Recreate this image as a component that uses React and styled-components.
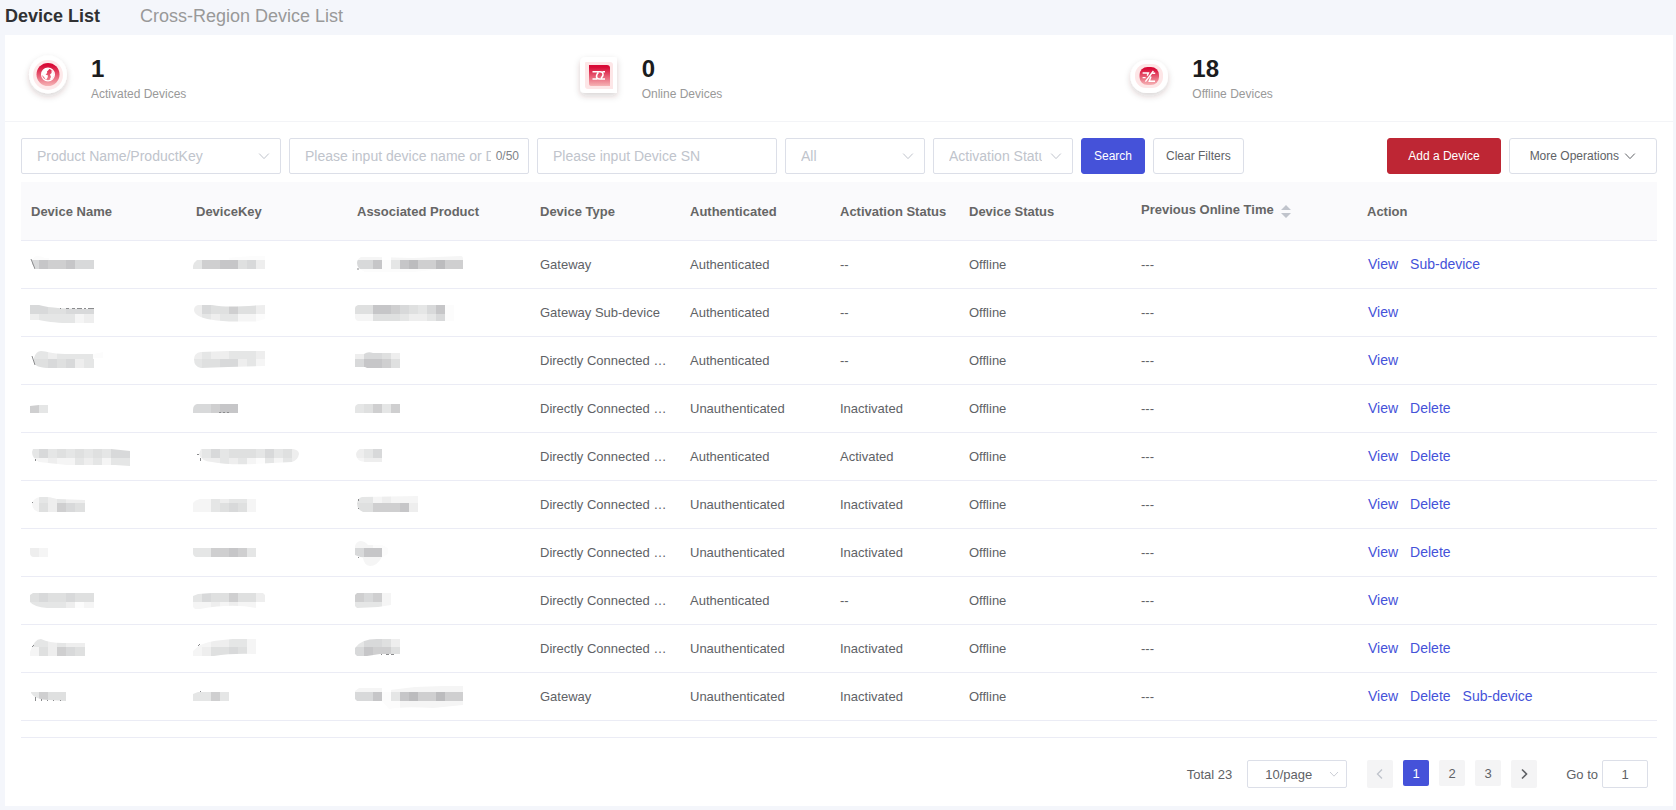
import { useId, useState } from "react";
import styled, { createGlobalStyle, css } from "styled-components";

const blue = "#4552d9";
const line = "#ebecf5";

const TONES = [
  "#fcfcfc",
  "#f5f5f5",
  "#eeeeee",
  "#e5e6e6",
  "#dfe0e0",
  "#d8d9da",
  "#cfcfd0",
  "#c6c6c8",
  "#bcbcbe",
];

// mosaic: x offset comes from the column, bands are [y, height, tones]
const devices = [
  {
    name: { bands: [[4, 5, "00"], [9, 9, "5766755"]], clip: "M5 9C7 4 12 4 18 7L67 9V18H9L5 13Z", marks: "M4 8l4 10" },
    key: { bands: [[5, 4, "....0000"], [9, 9, "36677452"]], clip: "M5 9L73 4V18H1V15Q2 11 5 9Z" },
    product: {
      bands: [[5, 4, "111.11111111"], [9, 9, "557037866866"], [18, 3, "000000000"]],
      clip: "M8 6H22L60 7L108 5Q110 5 110 8V18H90L60 21H12Q4 18 4 12Q4 8 8 6Z",
      marks: "M5 17v2",
    },
    type: "Gateway",
    auth: "Authenticated",
    activation: "--",
    actions: ["View", "Sub-device"],
  },
  {
    name: {
      bands: [[6, 9, "5544555"], [15, 9, "2333312"]],
      clip: "M3 6H12C22 9 40 10 67 10V24H40C28 24 18 22 12 21H3Z",
      marks: "M33 9.5h1M39 9.5h3M45 9.5h3M50 9.5h5M57 9.5h2M61 9.5h6",
    },
    key: { bands: [[6, 9, "25446442"], [15, 8, "23233110"]], clip: "M6 6H20C36 9 50 7 73 6V20L64 22.5H40C25 22 2 20 2 11Q2 7 6 6Z" },
    product: { bands: [[6, 9, "44776543570"], [15, 7, "11444322350"]], clip: "M5 6H101V22H5Q2 21 2 18V9Q2 7 5 6Z" },
    type: "Gateway Sub-device",
    auth: "Authenticated",
    activation: "--",
    actions: ["View"],
  },
  {
    name: { bands: [[4, 8, "33233330"], [12, 9, "4454523"]], clip: "M14 4C20 4 24 7 38 7H67L76 5V11H67V21H20C12 20 6 20 7 11Q9 4 14 4Z", marks: "M5 9l3 9" },
    key: { bands: [[4, 8, "23223332"], [12, 9, "34455231"]], clip: "M9 5L36 4H73V19L36 20L9 21Q2 20 2 12Q2 6 9 5Z" },
    product: { bands: [[5, 7, "25542"], [12, 9, "57764"]], clip: "M2 7H11Q15 4 20 6H47V21H14L12 20H2Z" },
    type: "Directly Connected Device",
    auth: "Authenticated",
    activation: "--",
    actions: ["View"],
  },
  {
    name: { bands: [[10, 8, "63"]], clip: "M3 11L21 9V18H3Z" },
    key: { bands: [[9, 9, "55677"]], clip: "M5 9H46V18H1V15Q1 10 5 9Z", marks: "M27 17.5h2M31 17.5h2M35 17.5h2" },
    product: { bands: [[9, 9, "34636"]], clip: "M5 9H47V18H2V13Q2 10 5 9Z" },
    type: "Directly Connected Device",
    auth: "Unauthenticated",
    activation: "Inactivated",
    actions: ["View", "Delete"],
  },
  {
    name: {
      bands: [[6, 9, "35343434355"], [15, 8, "11211323133"]],
      clip: "M6 6H84L103 8V23L88 22H40L12 19Q5 15 5 9Z",
      marks: "M8.5 16v2",
    },
    key: {
      bands: [[6, 9, "235344435342"], [15, 8, "122323103132"]],
      clip: "M9 6H101Q107 7 107 11Q106 17 100 19L80 20Q40 23 20 19Q9 18 7 11Z",
      marks: "M5 11.5h2M8.5 15v3",
    },
    product: { bands: [[6, 9, "235"], [15, 4, "122"]], clip: "M7 6H29V19H12Q3 18 3 11Q4 7 7 6Z" },
    type: "Directly Connected Device",
    auth: "Authenticated",
    activation: "Activated",
    actions: ["View", "Delete"],
  },
  {
    name: { bands: [[6, 6, "132322"], [12, 9, "142654"]], clip: "M13 6Q20 5 30 8L58 9V21H11Q5 19 5 12Q7 7 13 6Z", marks: "M5 11.5h1" },
    key: { bands: [[8, 4, "1132331"], [12, 9, "1134541"]], clip: "M8 8H64V21H1V12Q3 9 8 8Z" },
    product: { bands: [[5, 7, "3312111"], [12, 9, "4466672"]], clip: "M9 6L65 5V21H10Q4 19 4 12Q5 7 9 6Z", marks: "M5.5 8v2M5.5 17v1" },
    type: "Directly Connected Device",
    auth: "Unauthenticated",
    activation: "Inactivated",
    actions: ["View", "Delete"],
  },
  {
    name: { bands: [[9, 9, "21"]], clip: "M3 9H21V18H6Q3 17 3 14Z" },
    key: { bands: [[9, 9, "3366763"]], clip: "M1 9H64V18H4Q1 17 1 14Z" },
    product: {
      bands: [[2, 7, "1100"], [9, 9, "5770"], [18, 9, "1111"]],
      clip: "M7 2Q12 2 15 6H29L35 9V15L29 18Q24 27 17 27Q11 26 10 19L2 16V7Q3 3 7 2Z",
      marks: "M5.5 18v1",
    },
    type: "Directly Connected Device",
    auth: "Unauthenticated",
    activation: "Inactivated",
    actions: ["View", "Delete"],
  },
  {
    name: { bands: [[6, 9, "4544544"], [15, 6, "3333201"]], clip: "M6 6H67V21H20Q7 20 3 15V8Z" },
    key: { bands: [[6, 9, "35446442"], [15, 7, "1121211"]], clip: "M6 7L20 6H71L73 8V15H64V21Q40 16 8 22H3L1 20V9Z" },
    product: { bands: [[6, 9, "6561"], [15, 6, "3331"]], clip: "M4 6H38V18L25 20L4 21L2 19V8Z" },
    type: "Directly Connected Device",
    auth: "Authenticated",
    activation: "--",
    actions: ["View"],
  },
  {
    name: { bands: [[4, 8, "332322"], [12, 9, "142654"]], clip: "M14 4Q22 8 36 8H58V21H3V17Q7 4 14 4Z", marks: "M5 11.5h1M6 10.5h1" },
    key: { bands: [[4, 8, "1122331"], [12, 9, "1244541"]], clip: "M1 16Q8 8 22 6Q44 3 64 3V19Q40 18 22 21H1Z", marks: "M6 11l2-2" },
    product: { bands: [[4, 8, "35542"], [12, 9, "57664"]], clip: "M2 13Q8 4 24 4L47 3V19H27L14 21H4L2 19Z", marks: "M28 19.5h1M33 19.5h3M38 19.5h3" },
    type: "Directly Connected Device",
    auth: "Unauthenticated",
    activation: "Inactivated",
    actions: ["View", "Delete"],
  },
  {
    name: { bands: [[9, 9, "3644"]], clip: "M4 9H39V18L22 17Q8 17 4 10Z", marks: "M8.5 14v4M14.5 16v2M20 17.5h1M26 17.5h1M33 17.5h1" },
    key: { bands: [[9, 9, "3363"]], clip: "M6 9H37V18H1V11Z", marks: "M8 8.5h1" },
    product: {
      bands: [[3, 6, "111.11111111"], [9, 9, "557037866866"], [18, 8, "0.0001111111"]],
      clip: "M6 5H29V8L62 4L90 3H110V22L80 25Q50 23 36 26L29 18H4L2 16V8Z",
    },
    type: "Gateway",
    auth: "Unauthenticated",
    activation: "Inactivated",
    actions: ["View", "Delete", "Sub-device"],
  },
];

const columns = [
  { label: "Device Name", width: 165 },
  { label: "DeviceKey", width: 161 },
  { label: "Associated Product", width: 183 },
  { label: "Device Type", width: 150 },
  { label: "Authenticated", width: 150 },
  { label: "Activation Status", width: 129 },
  { label: "Device Status", width: 172 },
  { label: "Previous Online Time", width: 226, sortable: true },
  { label: "Action", width: 300 },
];

const Mosaic = ({ x, data }) => {
  const id = useId();
  return (
    <MosaicSvg width="116" height="27" aria-hidden="true">
      <clipPath id={id}>
        <path d={data.clip} />
      </clipPath>
      <g clipPath={`url(#${id})`} shapeRendering="crispEdges">
        {data.bands.map(([y, h, tones]) =>
          [...tones].map(
            (tone, i) =>
              tone !== "." && (
                <rect
                  key={`${y}-${i}`}
                  x={x + i * 9}
                  y={y}
                  width={i === tones.length - 1 ? 10 : 9}
                  height={h}
                  fill={TONES[tone]}
                />
              )
          )
        )}
      </g>
      {data.marks && <path d={data.marks} stroke="#8b8c8e" fill="none" />}
    </MosaicSvg>
  );
};

const Chevron = ({ size = 12, width = 1 }) => (
  <svg width={size} height={size} viewBox="0 0 12 12" aria-hidden="true">
    <path
      d="M1.2 3.6L6 8.6L10.8 3.6"
      fill="none"
      stroke="currentColor"
      strokeWidth={width}
    />
  </svg>
);

const SortIcon = () => (
  <SortSvg width="24" height="34" aria-hidden="true">
    <path d="M7 16L12 11L17 16ZM7 19H17L12 24Z" fill="#c0c4cc" />
  </SortSvg>
);

const IconDefs = ({ id }) => (
  <defs>
    <linearGradient id={`${id}g`} x1="0" y1="0" x2="0" y2="1">
      <stop offset="0.1" stopColor="#d80a36" />
      <stop offset="1" stopColor="#f6b3b5" />
    </linearGradient>
    <filter id={`${id}s`} x="-40%" y="-40%" width="180%" height="180%">
      <feDropShadow dx="0" dy="3" stdDeviation="3" floodColor="#402828" floodOpacity="0.2" />
    </filter>
  </defs>
);

const ActivatedIcon = () => {
  const id = useId();
  return (
    <svg width="54" height="54" aria-hidden="true">
      <IconDefs id={id} />
      <circle cx="27" cy="23.5" r="19" fill="#fff" filter={`url(#${id}s)`} />
      <circle cx="27" cy="24" r="15" fill="#fde9ea" />
      <circle cx="27" cy="23.5" r="11.5" fill={`url(#${id}g)`} />
      <circle cx="27" cy="23.5" r="6.4" fill="none" stroke="#fff" strokeWidth="1.2" />
      <path
        d="M21 20.5L24 17.5L28.5 17.3L27.6 19L26 20.4L26.2 22L24.6 23.4L27 24.6L26.6 26.6L25 29L23 26L21 24Z"
        fill="#fff"
      />
      <path d="M30.5 19L32.8 21.5L33 25L30.5 28.4L28.6 28.8L30 26L29 23.6L30.6 22Z" fill="#fff" />
    </svg>
  );
};

const OnlineIcon = () => {
  const id = useId();
  return (
    <svg width="54" height="54" aria-hidden="true">
      <IconDefs id={id} />
      <path
        d="M14 6H42Q45 6 45 9V42H13Q8 42 8 37V12Q8 6 14 6Z"
        fill="#fff"
        filter={`url(#${id}s)`}
      />
      <path d="M14 11H38Q41 11 41 14V38H16Q13 38 13 35V12Q13 11 14 11Z" fill="#fde6e7" />
      <path d="M17 14H35Q38 14 38 17V35H20Q17 35 17 33Z" fill={`url(#${id}g)`} />
      <path
        d="M20.5 20.8H28Q31.4 21 31 24Q30.6 26 29 27M33 28H27.4Q24 27.6 24.6 24.6Q25 22.6 26.4 21.6M20.5 28H25M30.5 20.8H33"
        fill="none"
        stroke="#fff"
        strokeWidth="1.6"
      />
    </svg>
  );
};

const OfflineIcon = () => {
  const id = useId();
  return (
    <svg width="54" height="54" aria-hidden="true">
      <IconDefs id={id} />
      <rect x="8.5" y="9" width="37.5" height="33" rx="16" fill="#fff" filter={`url(#${id}s)`} />
      <rect x="13" y="13" width="28" height="24" rx="11" fill="#fde6e7" />
      <rect x="17.5" y="16" width="19.5" height="18" rx="8" fill={`url(#${id}g)`} />
      <path
        d="M20.6 22H26.4L25.2 24.6M20.6 26.6H23.6M31.4 20L23.4 30.6M29 25.4L27.2 30.3H33M30.6 22.2H33.2"
        fill="none"
        stroke="#fff"
        strokeWidth="1.4"
      />
    </svg>
  );
};

const stats = [
  { value: 1, label: "Activated Devices", Icon: ActivatedIcon },
  { value: 0, label: "Online Devices", Icon: OnlineIcon },
  { value: 18, label: "Offline Devices", Icon: OfflineIcon },
];

const FilterSelect = ({ label, width }) => (
  <Field $width={width}>
    <Select aria-label={label} defaultValue="">
      <option value="">{label}</option>
    </Select>
    <FieldIcon>
      <Chevron />
    </FieldIcon>
  </Field>
);

const App = () => {
  const [page, setPage] = useState(1);
  const [name, setName] = useState("");

  return (
    <Page>
      <GlobalStyle />
      <Tabs>
        <Tab href="#devices" $active>
          Device List
        </Tab>
        <Tab href="#cross-region">Cross-Region Device List</Tab>
      </Tabs>
      <Card>
        <Stats>
          {stats.map(({ value, label, Icon }) => (
            <Stat key={label}>
              <Icon />
              <div>
                <StatValue>{value}</StatValue>
                <StatLabel>{label}</StatLabel>
              </div>
            </Stat>
          ))}
        </Stats>
        <Content>
          <Filters onSubmit={(e) => e.preventDefault()}>
            <FilterSelect label="Product Name/ProductKey" width={260} />
            <Field $width={240}>
              <Input
                aria-label="Device name"
                placeholder="Please input device name or DeviceKey"
                maxLength={50}
                value={name}
                onChange={(e) => setName(e.target.value)}
                $counter
              />
              <Counter>{name.length}/50</Counter>
            </Field>
            <Field $width={240}>
              <Input aria-label="Device SN" placeholder="Please input Device SN" />
            </Field>
            <FilterSelect label="All" width={140} />
            <FilterSelect label="Activation Status" width={140} />
            <Button $kind="primary">Search</Button>
            <Button type="reset">Clear Filters</Button>
            <Operations>
              <Button type="button" $kind="danger" $wide>
                Add a Device
              </Button>
              <Button type="button" $wide>
                More Operations
                <Chevron />
              </Button>
            </Operations>
          </Filters>
          <Table>
            <colgroup>
              {columns.map(({ label, width }) => (
                <Col key={label} $width={width} />
              ))}
            </colgroup>
            <thead>
              <tr>
                {columns.map(({ label, sortable }) => (
                  <Th key={label}>
                    {label}
                    {sortable && <SortIcon />}
                  </Th>
                ))}
              </tr>
            </thead>
            <tbody>
              {devices.map((device, i) => (
                <tr key={i}>
                  <Td>
                    <Mosaic x={3} data={device.name} />
                  </Td>
                  <Td>
                    <Mosaic x={1} data={device.key} />
                  </Td>
                  <Td>
                    <Mosaic x={2} data={device.product} />
                  </Td>
                  <Td>{device.type}</Td>
                  <Td>{device.auth}</Td>
                  <Td>{device.activation}</Td>
                  <Td>Offline</Td>
                  <Td>---</Td>
                  <Td>
                    <Actions>
                      {device.actions.map((action) => (
                        <ActionLink key={action} href="#action">
                          {action}
                        </ActionLink>
                      ))}
                    </Actions>
                  </Td>
                </tr>
              ))}
            </tbody>
          </Table>
          <Pagination>
            <span>Total 23</span>
            <Field $width={100}>
              <SizeSelect aria-label="Page size">
                <option>10/page</option>
              </SizeSelect>
              <FieldIcon $small>
                <Chevron size={10} />
              </FieldIcon>
            </Field>
            <Pager>
              <PageButton
                $arrow
                aria-label="Previous page"
                disabled={page === 1}
                onClick={() => setPage(page - 1)}
              >
                <svg width="12" height="12" aria-hidden="true">
                  <path d="M8 1.5L3.5 6L8 10.5" fill="none" stroke="currentColor" strokeWidth="1.4" />
                </svg>
              </PageButton>
              {[1, 2, 3].map((n) => (
                <PageButton key={n} $active={n === page} onClick={() => setPage(n)}>
                  {n}
                </PageButton>
              ))}
              <PageButton
                $arrow
                aria-label="Next page"
                disabled={page === 3}
                onClick={() => setPage(page + 1)}
              >
                <svg width="12" height="12" aria-hidden="true">
                  <path d="M4 1.5L8.5 6L4 10.5" fill="none" stroke="currentColor" strokeWidth="1.6" />
                </svg>
              </PageButton>
            </Pager>
            <Jump>
              Go to
              <JumpInput
                value={page}
                onChange={(e) => setPage(Number(e.target.value) || 1)}
              />
            </Jump>
          </Pagination>
        </Content>
      </Card>
    </Page>
  );
};
export default App;

const GlobalStyle = createGlobalStyle`
  * {
    box-sizing: border-box;
  }
  body {
    margin: 0;
    background: #f4f6fb;
    color: #606266;
    font: 13px "Liberation Sans", Arial, sans-serif;
  }
  input, select, button {
    font-family: inherit;
    outline: none;
  }
`;

const Page = styled.div`
  padding: 0 3px 4px 5px;
`;

const Tabs = styled.nav`
  display: flex;
  gap: 40px;
  height: 35px;
`;

const Tab = styled.a`
  color: ${(p) => (p.$active ? "#303133" : "#999")};
  font-size: 18px;
  font-weight: ${(p) => (p.$active ? "bold" : "normal")};
  line-height: 32px;
  text-decoration: none;
`;

const Card = styled.main`
  background: #fff;
`;

const Stats = styled.section`
  display: grid;
  grid-template-columns: repeat(3, 1fr);
  padding-left: 16px;
  border-bottom: 1px solid #f3f4f7;
`;

const Stat = styled.div`
  display: flex;
  align-items: center;
  gap: 16px;
  padding: 18px 0;

  svg {
    margin: -2px 0;
  }
`;

const StatValue = styled.div`
  color: #1b1c1e;
  font-size: 24px;
  font-weight: bold;
  line-height: 32px;
`;

const StatLabel = styled.div`
  color: #999;
  font-size: 12px;
  line-height: 18px;
`;

const Content = styled.section`
  padding: 16px 16px 18px;
`;

const Filters = styled.form`
  display: flex;
  gap: 8px;
  margin-bottom: 8px;
`;

const Operations = styled.div`
  display: flex;
  gap: 8px;
  margin-left: auto;
`;

const Field = styled.div`
  position: relative;
  width: ${(p) => p.$width}px;
`;

const control = css`
  display: block;
  width: 100%;
  border: 1px solid #dcdfe8;
  border-radius: 2px;
  background: #fff;
  appearance: none;
`;

const Input = styled.input`
  ${control}
  height: 36px;
  padding: 0 ${(p) => (p.$counter ? 37 : 15)}px 0 15px;
  font-size: 14px;
  color: #606266;

  &::placeholder {
    color: #c0c4cc;
  }
`;

const Select = styled.select`
  ${control}
  height: 36px;
  padding: 0 30px 0 15px;
  color: #c0c4cc;
  font-size: 14px;
`;

const SizeSelect = styled.select`
  ${control}
  height: 28px;
  padding: 0 25px 0 8px;
  color: #606266;
  font-size: 13px;
  text-align: center;
  text-align-last: center;
`;

const FieldIcon = styled.span`
  position: absolute;
  top: 0;
  right: ${(p) => (p.$small ? 8 : 11)}px;
  display: flex;
  align-items: center;
  height: 100%;
  color: #c0c4cc;
  pointer-events: none;
`;

const Counter = styled.span`
  position: absolute;
  top: 0;
  right: 10px;
  color: #808388;
  font-size: 12px;
  line-height: 36px;
`;

const kinds = {
  primary: blue,
  danger: "#be2634",
};

const Button = styled.button`
  display: flex;
  align-items: center;
  gap: 5px;
  height: 36px;
  padding: 0 ${(p) => (p.$wide ? 20 : 12)}px;
  border: 1px solid ${(p) => kinds[p.$kind] || "#dcdfe8"};
  border-radius: 3px;
  background: ${(p) => kinds[p.$kind] || "#fff"};
  color: ${(p) => (p.$kind ? "#fff" : "#606266")};
  font-size: 12px;
  white-space: nowrap;
`;

const Table = styled.table`
  width: 100%;
  table-layout: fixed;
  border-spacing: 0;
`;

const Col = styled.col`
  width: ${(p) => p.$width}px;
`;

const Th = styled.th`
  height: 59px;
  padding: 0 0 0 10px;
  border-bottom: 1px solid ${line};
  background: #fafafc;
  color: #666;
  text-align: left;
  white-space: nowrap;
`;

const Td = styled.td`
  height: 48px;
  padding: 0 10px;
  border-bottom: 1px solid ${line};
  overflow: hidden;
  text-overflow: ellipsis;
  white-space: nowrap;
`;

const MosaicSvg = styled.svg`
  display: block;
  margin-left: -4px;
`;

const SortSvg = styled.svg`
  vertical-align: middle;
`;

const Actions = styled.div`
  display: flex;
  gap: 12px;
  padding: 0 0 2px 1px;
`;

const ActionLink = styled.a`
  color: ${blue};
  font-size: 14px;
  text-decoration: none;
`;

const Pagination = styled.footer`
  display: flex;
  align-items: center;
  justify-content: flex-end;
  margin-top: 16px;
  padding: 22px 9px 0 0;
  border-top: 1px solid ${line};

  ${Field} {
    margin: 0 20px 0 15px;
  }
`;

const Pager = styled.div`
  display: flex;
  gap: 10px;
`;

const PageButton = styled.button`
  display: flex;
  align-items: center;
  justify-content: center;
  width: 26px;
  height: ${(p) => (p.$arrow ? 28 : 26)}px;
  padding: 0;
  border: 0;
  border-radius: 2px;
  background: ${(p) => (p.$active ? blue : "#f4f4f5")};
  color: ${(p) => (p.$active ? "#fff" : "#606266")};
  font-size: 13px;

  &:disabled {
    color: #c0c4cc;
  }
`;

const Jump = styled.label`
  display: flex;
  align-items: center;
  gap: 4px;
  margin-left: 29px;
`;

const JumpInput = styled.input`
  ${control}
  width: 46px;
  height: 28px;
  padding: 0 3px;
  color: #606266;
  font-size: 13px;
  text-align: center;
`;
